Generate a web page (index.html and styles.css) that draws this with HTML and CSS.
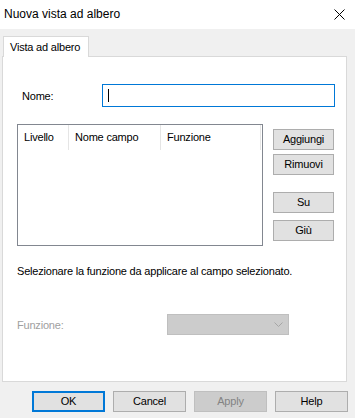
FILE: index.html
```html
<!DOCTYPE html>
<html>
<head>
<meta charset="utf-8">
<link rel="stylesheet" href="styles.css">
</head>
<body>
<div class="window">
  <div class="titlebar">
    <span class="title">Nuova vista ad albero</span>
    <svg class="close" width="11" height="11" viewBox="0 0 11 11"><path d="M0.5 0.5 L10.5 10.5 M10.5 0.5 L0.5 10.5" stroke="#000" stroke-width="1" fill="none"/></svg>
  </div>
  <div class="tabs">
    <div class="tab">Vista ad albero</div>
  </div>
  <div class="panel">
    <div class="name-row">
      <label class="name-label">Nome:</label>
      <div class="name-input"><span class="caret"></span></div>
    </div>
    <div class="list-row">
      <div class="listview">
        <div class="lv-header">
          <div class="col c1">Livello</div>
          <div class="col c2">Nome campo</div>
          <div class="col c3">Funzione</div>
        </div>
      </div>
      <div class="side-buttons">
        <button class="btn side">Aggiungi</button>
        <button class="btn side gap-sm">Rimuovi</button>
        <button class="btn side gap-lg">Su</button>
        <button class="btn side gap-md">Giù</button>
      </div>
    </div>
    <p class="hint">Selezionare la funzione da applicare al campo selezionato.</p>
    <div class="func-row">
      <span class="func-label">Funzione:</span>
      <div class="combo disabled">
        <svg class="chev" width="9" height="5" viewBox="0 0 9 5"><path d="M0.5 0.5 L4.5 4.5 L8.5 0.5" stroke="#a6a6a6" stroke-width="1" fill="none"/></svg>
      </div>
    </div>
  </div>
  <div class="dialog-buttons">
    <button class="btn dlg default">OK</button>
    <button class="btn dlg">Cancel</button>
    <button class="btn dlg disabled">Apply</button>
    <button class="btn dlg">Help</button>
  </div>
</div>
</body>
</html>
```

FILE: styles.css
```css
* { box-sizing: border-box; }
html, body {
  margin: 0;
  padding: 0;
}
body {
  width: 355px;
  height: 418px;
  background: #f0f0f0;
  font-family: "Liberation Sans", Arial, sans-serif;
  font-size: 11px;
  letter-spacing: -0.2px;
  color: #000;
  overflow: hidden;
}
.window {
  display: flex;
  flex-direction: column;
  height: 418px;
}
.titlebar {
  height: 29px;
  background: #fff;
  display: flex;
  align-items: center;
  justify-content: space-between;
  padding: 0 10px 1px 4px;
}
.title { font-size: 12px; letter-spacing: 0; }
.close { display: block; }
.tabs {
  padding: 7px 0 0 3px;
  display: flex;
  position: relative;
  z-index: 2;
}
.tab {
  width: 86px;
  height: 21px;
  margin-bottom: -1px;
  background: #fff;
  border: 1px solid #d9d9d9;
  border-bottom: none;
  padding: 3px 0 0 6px;
  line-height: 14px;
  white-space: nowrap;
}
.panel {
  margin: 0 8px 0 2px;
  height: 326px;
  background: #fff;
  border: 1px solid #d9d9d9;
  display: flex;
  flex-direction: column;
  padding: 27px 0 0 14px;
}
.name-row {
  display: flex;
  align-items: center;
  height: 23px;
}
.name-label {
  width: 85px;
  padding-left: 5px;
}
.name-input {
  width: 233px;
  height: 23px;
  border: 1px solid #0078d7;
  padding: 4px 0 0 5px;
}
.caret {
  display: block;
  width: 1px;
  height: 13px;
  background: #000;
}
.list-row {
  display: flex;
  margin-top: 17px;
}
.listview {
  width: 246px;
  height: 122px;
  border: 1px solid #828790;
}
.lv-header {
  display: flex;
  height: 25px;
}
.col {
  border-right: 1px solid #e5e5e5;
  padding: 5px 0 0 6px;
  line-height: 14px;
  white-space: nowrap;
}
.c1 { width: 51px; }
.c2 { width: 92px; }
.c3 { width: 100px; }
.side-buttons {
  display: flex;
  flex-direction: column;
  margin: 5px 0 0 10px;
}
.btn {
  font-family: "Liberation Sans", Arial, sans-serif;
  font-size: 11px;
  letter-spacing: -0.2px;
  color: #000;
  background: #e1e1e1;
  border: 1px solid #adadad;
  padding: 0;
  margin: 0;
  height: 21px;
  line-height: 19px;
  text-align: center;
}
.side { width: 61px; }
.gap-sm { margin-top: 4px; }
.gap-lg { margin-top: 17px; }
.gap-md { margin-top: 7px; }
.hint {
  margin: 18px 0 0 0;
  line-height: 14px;
  white-space: nowrap;
}
.func-row {
  display: flex;
  align-items: center;
  margin-top: 36px;
  height: 21px;
}
.func-label {
  width: 150px;
  color: #a0a0a0;
}
.combo {
  width: 122px;
  height: 21px;
  background: #cccccc;
  border: 1px solid #bfbfbf;
  display: flex;
  align-items: center;
  justify-content: flex-end;
  padding-right: 5px;
}
.chev { display: block; }
.dialog-buttons {
  display: flex;
  justify-content: flex-end;
  gap: 8px;
  margin-top: 9px;
  padding-right: 7px;
}
.dlg { width: 73px; }
.dlg.default {
  border: 2px solid #0078d7;
  line-height: 17px;
}
.btn.disabled {
  background: #cccccc;
  border-color: #bfbfbf;
  color: #838383;
}
```
